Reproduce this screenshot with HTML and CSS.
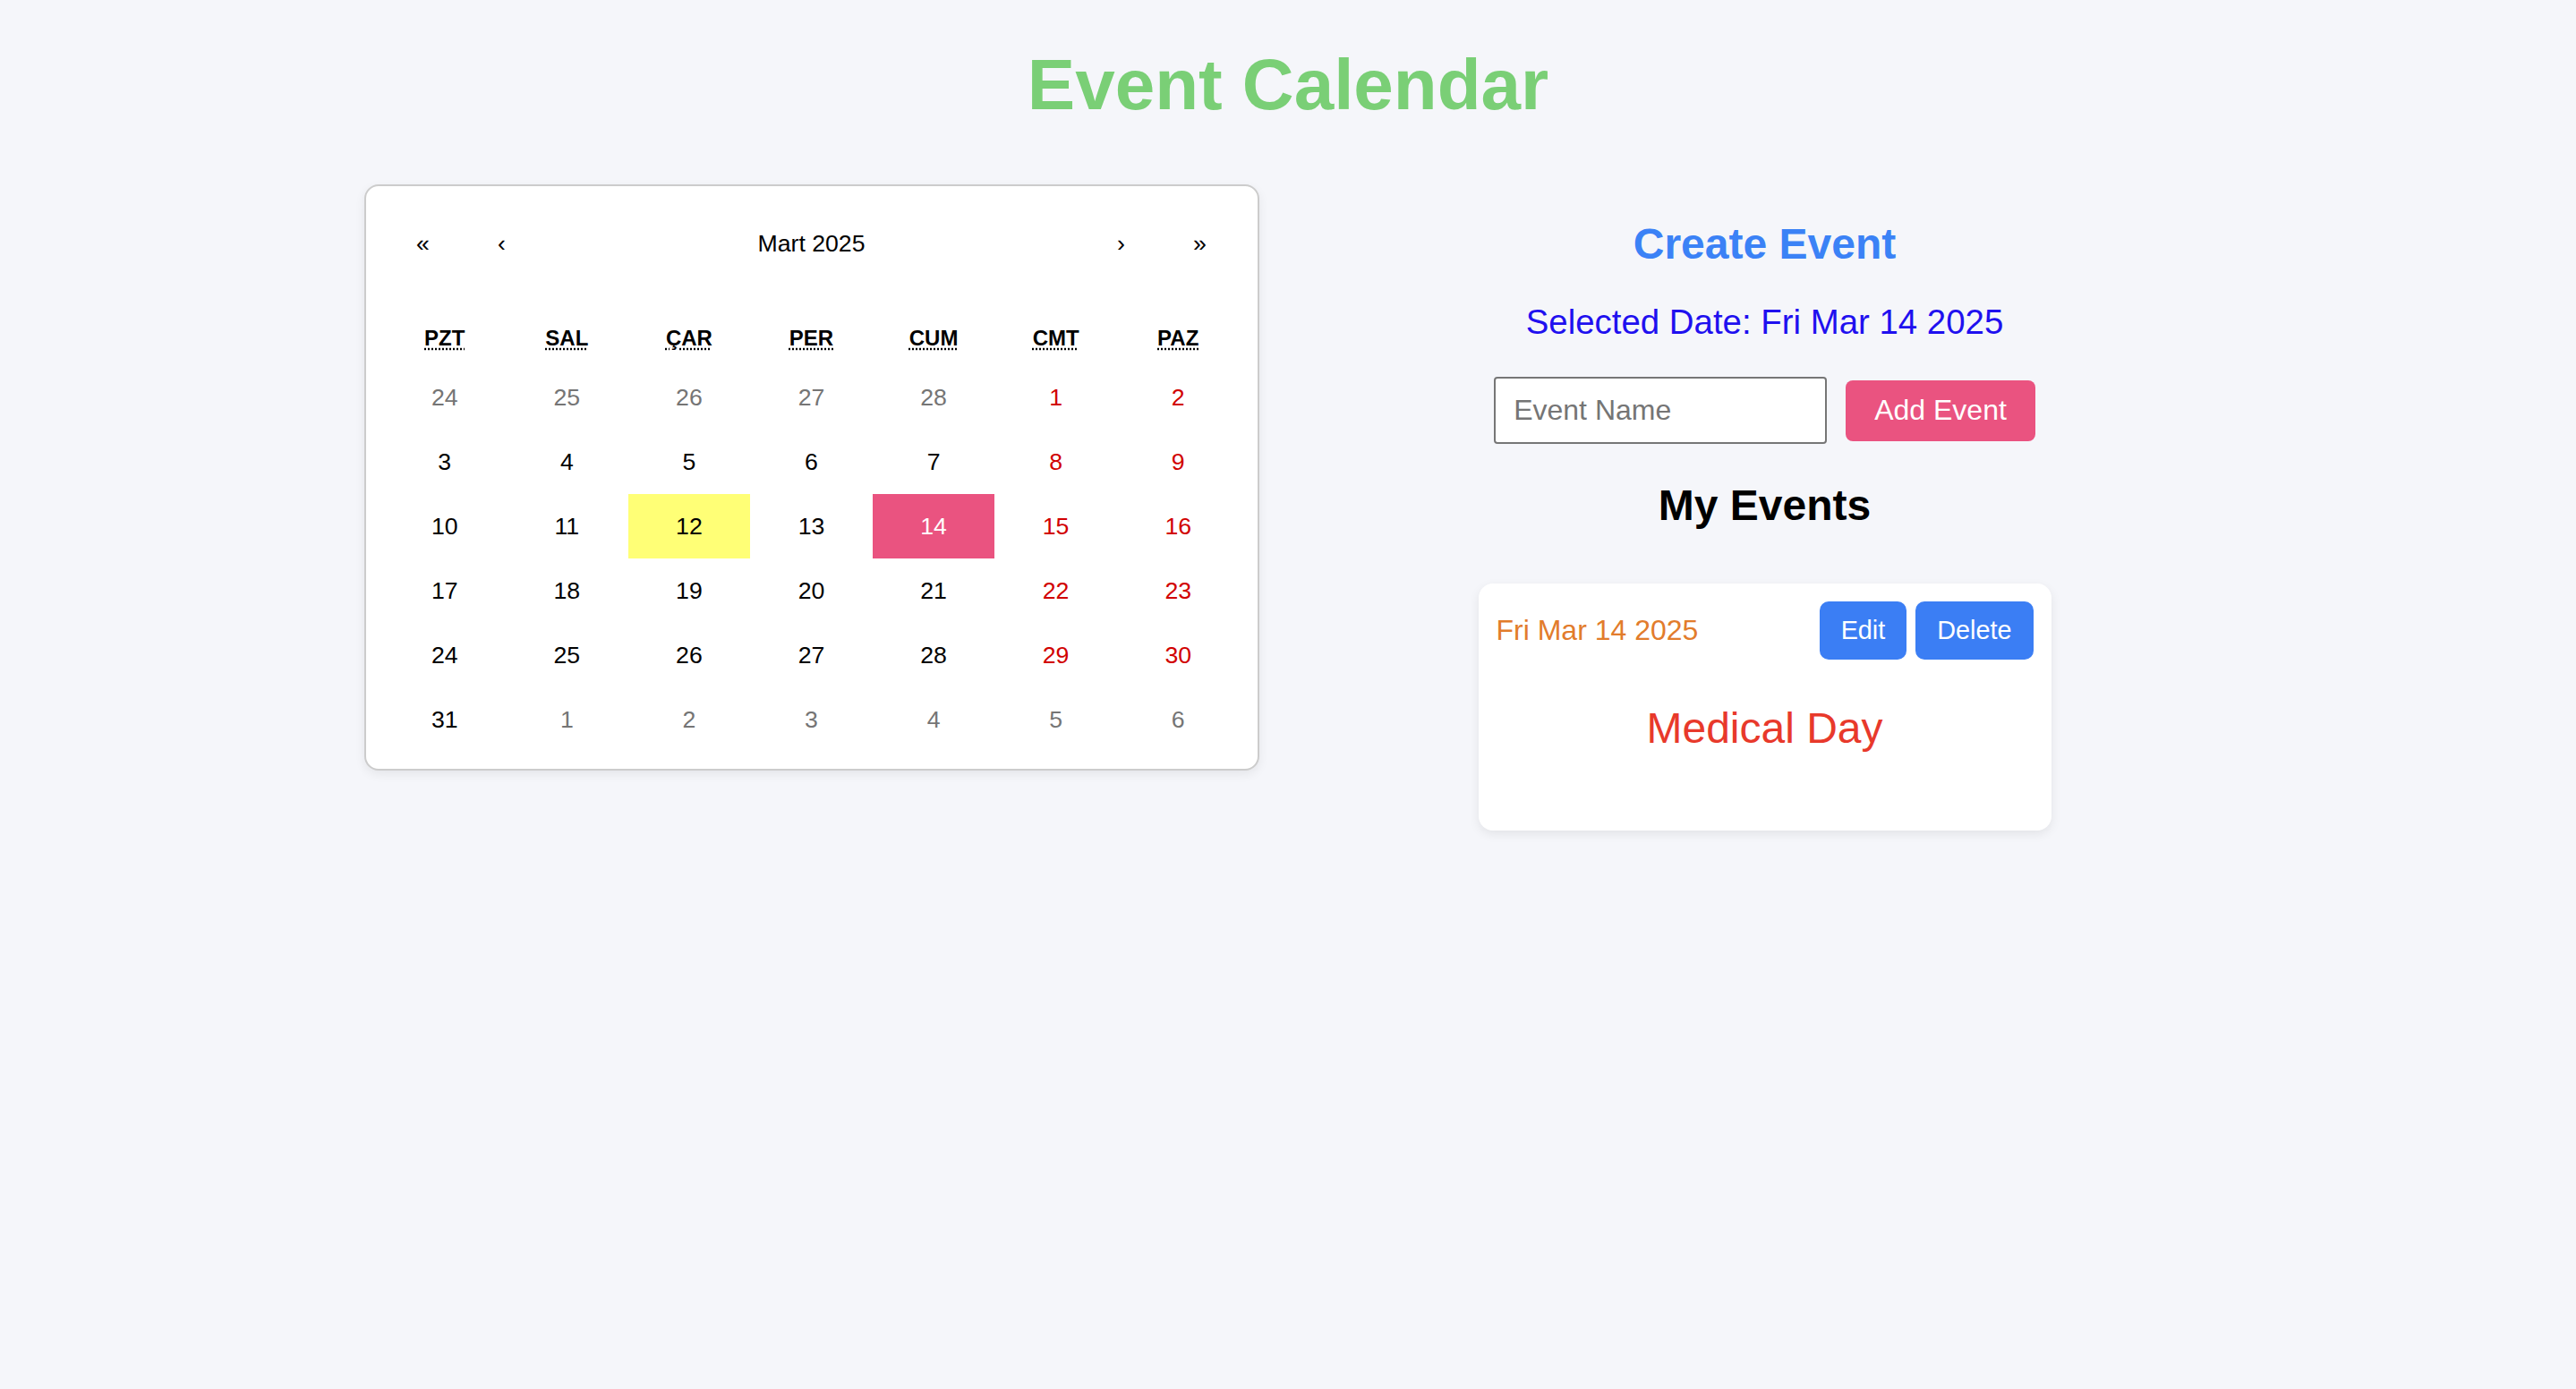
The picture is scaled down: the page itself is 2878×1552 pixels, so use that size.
FILE: index.html
```html
<!DOCTYPE html>
<html lang="tr">
<head>
<meta charset="utf-8">
<title>Event Calendar</title>
<link rel="stylesheet" href="styles.css">
</head>
<body>
<div class="page">
  <h1 class="title">Event Calendar</h1>
  <div class="layout">
    <div class="calendar">
      <div class="cal-nav">
        <button class="nav-btn">«</button>
        <button class="nav-btn">‹</button>
        <button class="nav-label">Mart 2025</button>
        <button class="nav-btn">›</button>
        <button class="nav-btn">»</button>
      </div>
      <div class="cal-weekdays">
        <div class="weekday"><abbr title="Pazartesi">Pzt</abbr></div>
        <div class="weekday"><abbr title="Salı">Sal</abbr></div>
        <div class="weekday"><abbr title="Çarşamba">Çar</abbr></div>
        <div class="weekday"><abbr title="Perşembe">Per</abbr></div>
        <div class="weekday"><abbr title="Cuma">Cum</abbr></div>
        <div class="weekday"><abbr title="Cumartesi">Cmt</abbr></div>
        <div class="weekday"><abbr title="Pazar">Paz</abbr></div>
      </div>
      <div class="cal-days">
        <button class="tile other">24</button>
        <button class="tile other">25</button>
        <button class="tile other">26</button>
        <button class="tile other">27</button>
        <button class="tile other">28</button>
        <button class="tile weekend">1</button>
        <button class="tile weekend">2</button>
        <button class="tile">3</button>
        <button class="tile">4</button>
        <button class="tile">5</button>
        <button class="tile">6</button>
        <button class="tile">7</button>
        <button class="tile weekend">8</button>
        <button class="tile weekend">9</button>
        <button class="tile">10</button>
        <button class="tile">11</button>
        <button class="tile now">12</button>
        <button class="tile">13</button>
        <button class="tile active">14</button>
        <button class="tile weekend">15</button>
        <button class="tile weekend">16</button>
        <button class="tile">17</button>
        <button class="tile">18</button>
        <button class="tile">19</button>
        <button class="tile">20</button>
        <button class="tile">21</button>
        <button class="tile weekend">22</button>
        <button class="tile weekend">23</button>
        <button class="tile">24</button>
        <button class="tile">25</button>
        <button class="tile">26</button>
        <button class="tile">27</button>
        <button class="tile">28</button>
        <button class="tile weekend">29</button>
        <button class="tile weekend">30</button>
        <button class="tile">31</button>
        <button class="tile other">1</button>
        <button class="tile other">2</button>
        <button class="tile other">3</button>
        <button class="tile other">4</button>
        <button class="tile other">5</button>
        <button class="tile other">6</button>
      </div>
    </div>
    <div class="panel">
      <h2 class="create-title">Create Event</h2>
      <p class="selected">Selected Date: Fri Mar 14 2025</p>
      <div class="form-row">
        <input class="event-input" type="text" placeholder="Event Name">
        <button class="add-btn">Add Event</button>
      </div>
      <h2 class="my-title">My Events</h2>
      <div class="event-card">
        <div class="event-head">
          <span class="event-date">Fri Mar 14 2025</span>
          <div class="event-actions">
            <button class="small-btn">Edit</button>
            <button class="small-btn">Delete</button>
          </div>
        </div>
        <p class="event-name">Medical Day</p>
      </div>
    </div>
  </div>
</div>
</body>
</html>
```
FILE: styles.css
```css
html, body {
  margin: 0;
  padding: 0;
}
body {
  background: #f5f6fa;
  font-family: "Liberation Sans", Arial, Helvetica, sans-serif;
  color: #000;
  min-height: 1552px;
}
.page {
  padding-top: 49px;
}
.title {
  margin: 0;
  text-align: center;
  font-size: 80px;
  font-weight: bold;
  line-height: normal;
  color: #7acf76;
}
.layout {
  width: 2130px;
  margin: 65px auto 0;
  display: grid;
  grid-template-columns: 1fr 1fr;
  justify-items: center;
  align-items: start;
}

/* calendar */
.calendar {
  width: 1000px;
  box-sizing: border-box;
  background: #fff;
  border: 2px solid #cccccc;
  border-radius: 16px;
  padding: 20px 20px 19px;
  box-shadow: 0 4px 12px rgba(0, 0, 0, 0.07);
  font-family: "Liberation Sans", Arial, Helvetica, sans-serif;
}
.calendar button {
  margin: 0;
  border: 0;
  outline: none;
  background: none;
  font-family: inherit;
  color: #000;
  cursor: pointer;
}
.cal-nav {
  display: flex;
  height: 88px;
  margin-bottom: 32px;
}
.nav-btn {
  min-width: 88px;
  padding: 0;
  font-size: 26.67px;
}
.nav-label {
  flex-grow: 1;
  font-size: 26.67px;
}
.cal-weekdays {
  display: grid;
  grid-template-columns: repeat(7, 1fr);
  text-align: center;
  text-transform: uppercase;
  font-weight: bold;
  font-size: 24px;
  line-height: 36px;
}
.weekday {
  padding: 12px;
}
.weekday abbr {
  text-decoration: underline dotted;
  text-underline-offset: 3px;
}
.cal-days {
  display: grid;
  grid-template-columns: repeat(7, 1fr);
}
.tile {
  padding: 20px 13px;
  font-size: 26.67px;
  line-height: 32px;
  text-align: center;
}
.calendar .tile.weekend {
  color: #d10000;
}
.calendar .tile.other {
  color: #757575;
}
.calendar .tile.now {
  background: #ffff76;
}
.calendar .tile.active {
  background: #ea5380;
  color: #fff;
}

/* right panel */
.panel {
  width: 700px;
  display: flex;
  flex-direction: column;
  align-items: center;
  text-align: center;
}
.create-title {
  margin: 39px 0 0;
  font-size: 48px;
  font-weight: bold;
  line-height: normal;
  color: #3b82f6;
}
.selected {
  margin: 38px 0 39px;
  font-size: 38.4px;
  line-height: normal;
  color: #1f10ef;
}
.form-row {
  display: flex;
  align-items: center;
  gap: 21px;
}
.event-input {
  width: 372px;
  height: 75px;
  box-sizing: border-box;
  border: 2px solid #767676;
  border-radius: 4px;
  padding: 0 20px;
  margin: 0;
  font-family: "Liberation Sans", Arial, sans-serif;
  font-size: 32px;
  background: #fff;
  color: #000;
}
.event-input::placeholder {
  color: #757575;
}
.add-btn {
  height: 68px;
  padding: 0 32px;
  border: 0;
  border-radius: 8px;
  background: #ea5380;
  color: #fff;
  font-family: "Liberation Sans", Arial, sans-serif;
  font-size: 32px;
}
.my-title {
  margin: 41px 0 60px;
  font-size: 48px;
  font-weight: bold;
  line-height: normal;
  color: #000;
}
.event-card {
  width: 640px;
  box-sizing: border-box;
  padding: 20px;
  background: #fff;
  border-radius: 16px;
  box-shadow: 0 4px 12px rgba(0, 0, 0, 0.08);
}
.event-head {
  display: flex;
  justify-content: space-between;
  align-items: center;
}
.event-date {
  font-size: 32px;
  color: #e27c2c;
}
.event-actions {
  display: flex;
  gap: 10px;
}
.small-btn {
  padding: 16px 24px;
  border: 0;
  border-radius: 10px;
  background: #3b7ef4;
  color: #fff;
  font-family: "Liberation Sans", Arial, sans-serif;
  font-size: 28.8px;
  line-height: normal;
}
.event-name {
  margin: 49px 0 67px;
  font-size: 48px;
  line-height: normal;
  color: #e8392b;
}
```
